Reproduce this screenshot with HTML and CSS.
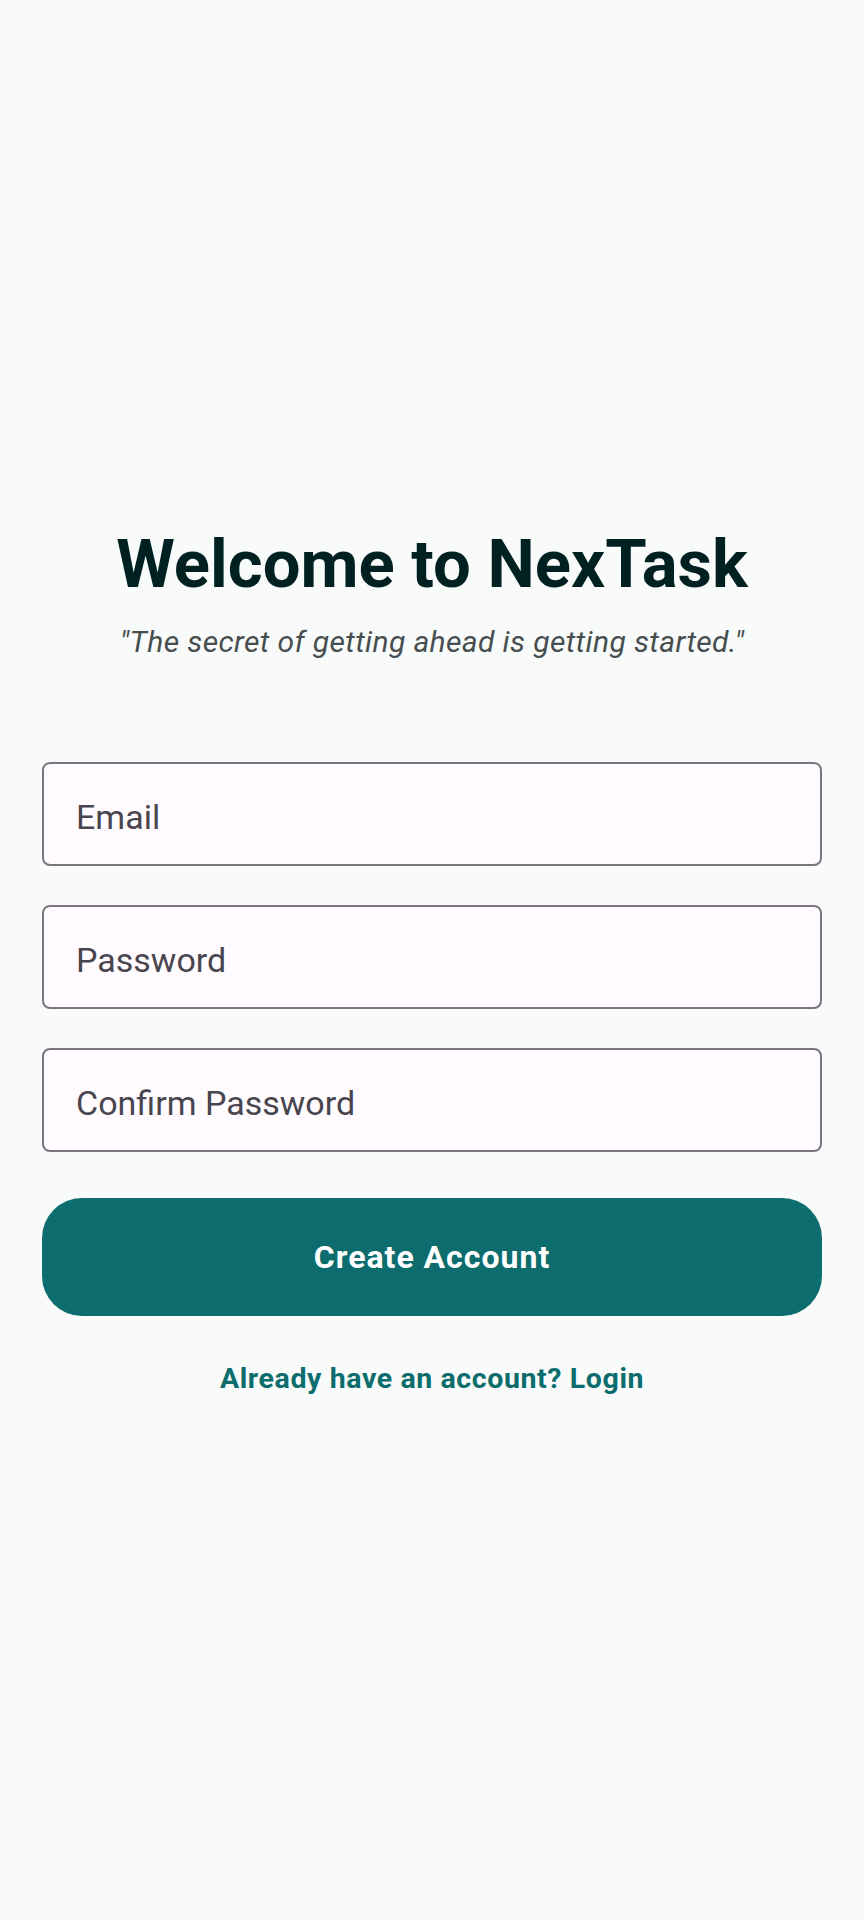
FILE: index.html
```html
<!DOCTYPE html>
<html lang="en">
<head>
<meta charset="utf-8">
<title>NexTask – Sign up</title>
<link rel="stylesheet" href="styles.css">
</head>
<body>
<main class="screen">
  <h1 class="title">Welcome to NexTask</h1>
  <p class="quote">"The secret of getting ahead is getting started."</p>
  <form class="form">
    <input class="field" type="email" placeholder="Email">
    <input class="field" type="password" placeholder="Password">
    <input class="field" type="password" placeholder="Confirm Password">
    <button class="btn" type="button">Create Account</button>
  </form>
  <a class="link" href="#">Already have an account? Login</a>
</main>
</body>
</html>
```

FILE: styles.css
```css
* { box-sizing: border-box; }
html, body {
  margin: 0;
  padding: 0;
  background: #f8fbfa;
}
body {
  font-family: Roboto, "Noto Sans", sans-serif;
  width: 864px;
  height: 1920px;
}
.screen {
  display: flex;
  flex-direction: column;
  align-items: center;
  padding: 524px 42px 0;
}
.title {
  margin: 0;
  font-size: 67px;
  line-height: 80px;
  font-weight: 700;
  color: #002021;
  text-align: center;
}
.quote {
  margin: 18px 0 0;
  font-size: 30px;
  line-height: 40px;
  font-style: italic;
  letter-spacing: 0.38px;
  color: #474e4f;
  text-align: center;
}
.form {
  width: 100%;
  margin-top: 100px;
  display: flex;
  flex-direction: column;
  gap: 39px;
}
.field {
  width: 100%;
  height: 104px;
  border: 2px solid #7a767f;
  border-radius: 8px;
  background: #fffbfe;
  padding: 5px 0 0 32px;
  font-family: Roboto, "Noto Sans", sans-serif;
  font-size: 34px;
  color: #1c1b1f;
  outline: none;
}
.field::placeholder {
  color: #49454f;
  opacity: 1;
}
.btn {
  margin-top: 7px;
  width: 100%;
  height: 118px;
  border: 0;
  border-radius: 40px;
  background: #0d6c6d;
  color: #ffffff;
  font-family: Roboto, "Noto Sans", sans-serif;
  font-size: 32px;
  letter-spacing: 1px;
  font-weight: 700;
}
.link {
  margin-top: 45px;
  font-size: 28.5px;
  line-height: 36px;
  letter-spacing: 0.6px;
  font-weight: 700;
  color: #0d6c6d;
  text-decoration: none;
}
```
